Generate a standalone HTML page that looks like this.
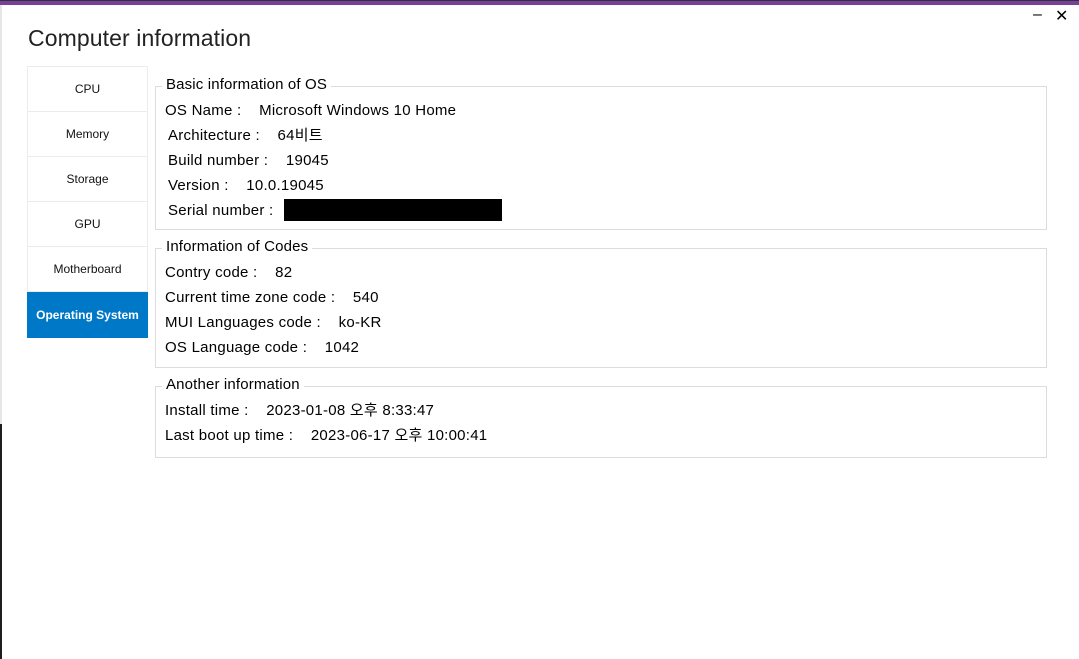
<!DOCTYPE html><html><head><style>
body{margin:0;width:1079px;height:659px;background:#fff;position:relative;overflow:hidden;font-family:"Liberation Sans","Noto Sans CJK KR",sans-serif;color:#000}
.top{position:absolute;left:0;top:0;width:1079px;height:5px;background:#77409a}
.top:before{content:"";position:absolute;left:0;top:0;width:1079px;height:1px;background:#333}
.ls{position:absolute;left:0;top:5px;width:2px;height:419px;background:#e6e6e6}
.ld{position:absolute;left:0;top:424px;width:2px;height:235px;background:#1e1e1e}
h1{position:absolute;left:28px;top:25px;margin:0;font-weight:normal;font-size:23px;color:#222;letter-spacing:0.1px}
.side{position:absolute;left:27px;top:66px;width:121px}
.it{height:44px;border:1px solid #ececec;border-top:none;font-size:12px;display:flex;align-items:center;justify-content:center;color:#111}
.it:first-child{border-top:1px solid #ececec}
.it.a{background:#0078c8;color:#fff;font-weight:bold;border-color:#0078c8;height:45px;font-size:12px;letter-spacing:0}
.g{position:absolute;left:155px;width:890px;border:1px solid #dcdcdc}
.lg{position:absolute;left:6px;top:-11px;background:#fff;padding:0 4px;font-size:15px;line-height:18px;letter-spacing:0.15px}
.r{position:absolute;font-size:15px;line-height:18px;white-space:pre;letter-spacing:0.25px}
.x{position:absolute;font-size:16px}
</style></head><body>
<div class="top"></div><div class="ls"></div><div class="ld"></div>
<div class="x" style="left:1033px;top:6px">–</div>
<div class="x" style="left:1055px;top:6px">✕</div>
<h1>Computer information</h1>
<div class="side">
<div class="it">CPU</div><div class="it">Memory</div><div class="it">Storage</div><div class="it">GPU</div><div class="it">Motherboard</div><div class="it a">Operating System</div>
</div>
<div class="g" style="top:86px;height:142px"><div class="lg">Basic information of OS</div></div>
<div class="r" style="left:165px;top:102px">OS Name :    Microsoft Windows 10 Home</div>
<div class="r" style="left:168px;top:127px">Architecture :    64비트</div>
<div class="r" style="left:168px;top:152px">Build number :    19045</div>
<div class="r" style="left:168px;top:177px">Version :    10.0.19045</div>
<div class="r" style="left:168px;top:202px">Serial number :</div>
<div style="position:absolute;left:284px;top:199px;width:218px;height:22px;background:#000"></div>
<div class="g" style="top:248px;height:118px"><div class="lg">Information of Codes</div></div>
<div class="r" style="left:165px;top:264px">Contry code :    82</div>
<div class="r" style="left:165px;top:289px">Current time zone code :    540</div>
<div class="r" style="left:165px;top:314px">MUI Languages code :    ko-KR</div>
<div class="r" style="left:165px;top:339px">OS Language code :    1042</div>
<div class="g" style="top:386px;height:70px"><div class="lg">Another information</div></div>
<div class="r" style="left:165px;top:402px">Install time :    2023-01-08 오후 8:33:47</div>
<div class="r" style="left:165px;top:427px">Last boot up time :    2023-06-17 오후 10:00:41</div>
</body></html>
